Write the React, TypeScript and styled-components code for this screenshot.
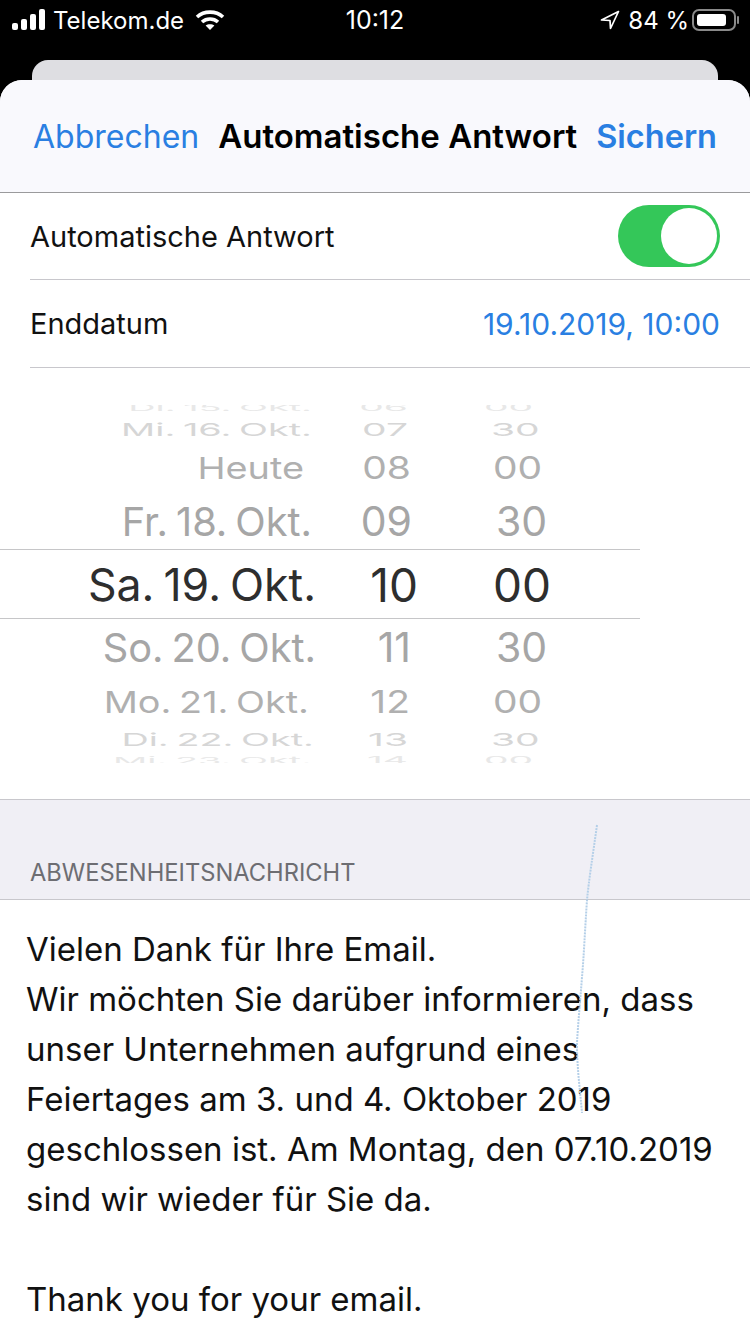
import styled, { createGlobalStyle } from "styled-components";

const FONT = `Inter, "Liberation Sans", sans-serif`;
const BLUE = "#2a7fe2";

interface WheelRow {
  date: string;
  hour: string;
  minute: string;
  height: number;
  size: number;
  squash: number;
  nudge: number;
  color: string;
  dateEnd: number;
  hourEnd: number;
  minuteStart: number;
}

const wheelRows: WheelRow[] = [
  { date: "Di. 15. Okt.", hour: "06", minute: "00", height: 12, size: 39, squash: 0.25, nudge: -4, color: "#e8e8e8", dateEnd: 312, hourEnd: 408, minuteStart: 484 },
  { date: "Mi. 16. Okt.", hour: "07", minute: "30", height: 24, size: 39, squash: 0.46, nudge: 0, color: "#d6d6d6", dateEnd: 312, hourEnd: 408, minuteStart: 491 },
  { date: "Heute", hour: "08", minute: "00", height: 52, size: 39, squash: 0.8, nudge: 1, color: "#b0b0b0", dateEnd: 304, hourEnd: 411, minuteStart: 493 },
  { date: "Fr. 18. Okt.", hour: "09", minute: "30", height: 56, size: 41, squash: 1, nudge: 1, color: "#a6a6a6", dateEnd: 312, hourEnd: 412, minuteStart: 496 },
  { date: "Sa. 19. Okt.", hour: "10", minute: "00", height: 70, size: 46, squash: 1, nudge: 2, color: "#2e2e2e", dateEnd: 316, hourEnd: 418, minuteStart: 493 },
  { date: "So. 20. Okt.", hour: "11", minute: "30", height: 56, size: 41, squash: 1, nudge: 1, color: "#a6a6a6", dateEnd: 316, hourEnd: 411, minuteStart: 496 },
  { date: "Mo. 21. Okt.", hour: "12", minute: "00", height: 52, size: 39, squash: 0.8, nudge: 1, color: "#b0b0b0", dateEnd: 309, hourEnd: 410, minuteStart: 493 },
  { date: "Di. 22. Okt.", hour: "13", minute: "30", height: 24, size: 39, squash: 0.46, nudge: 0, color: "#d6d6d6", dateEnd: 314, hourEnd: 408, minuteStart: 491 },
  { date: "Mi. 23. Okt.", hour: "14", minute: "00", height: 12, size: 39, squash: 0.25, nudge: 3, color: "#e8e8e8", dateEnd: 312, hourEnd: 408, minuteStart: 484 },
];

const messageLines = [
  "Vielen Dank für Ihre Email.",
  "Wir möchten Sie darüber informieren, dass",
  "unser Unternehmen aufgrund eines",
  "Feiertages am 3. und 4. Oktober 2019",
  "geschlossen ist. Am Montag, den 07.10.2019",
  "sind wir wieder für Sie da.",
  "\u00a0",
  "Thank you for your email.",
];

export default function App() {
  return (
    <Screen>
      <GlobalStyle />
      <StatusBar>
        <StatusLeft>
          <svg width="34" height="22" viewBox="0 0 34 22" fill="#fff">
            <rect x="0" y="14" width="6" height="7" rx="2" />
            <rect x="9" y="10" width="6" height="11" rx="2" />
            <rect x="18" y="5" width="6" height="16" rx="2" />
            <rect x="27" y="0" width="6" height="21" rx="2" />
          </svg>
          <StatusText>Telekom.de</StatusText>
          <WifiIcon width="30" height="22" viewBox="0 0 30 22" fill="none" stroke="#fff" strokeWidth="3.6">
            <path d="M2 8 C9 1.5 21 1.5 28 8" />
            <path d="M7 13 C11.5 9 18.5 9 23 13" />
            <path d="M15 21 L10.6 16.6 C13 14.7 17 14.7 19.4 16.6 Z" fill="#fff" stroke="none" />
          </WifiIcon>
        </StatusLeft>
        <StatusTime>10:12</StatusTime>
        <StatusRight>
          <svg width="20" height="20" viewBox="0 0 20 20" fill="none" stroke="#fff" strokeWidth="1.7" strokeLinejoin="round">
            <path d="M18.5 1.5 L1.5 10 L10 10.5 L10.5 18.5 Z" />
          </svg>
          <StatusText>84 %</StatusText>
          <Battery>
            <BatteryFill />
          </Battery>
        </StatusRight>
      </StatusBar>
      <BackCard />
      <Sheet>
        <NavBar>
          <NavCancel>Abbrechen</NavCancel>
          <NavTitle>Automatische Antwort</NavTitle>
          <NavSave>Sichern</NavSave>
        </NavBar>
        <SettingRow $height={87}>
          <RowLabel>Automatische Antwort</RowLabel>
          <Toggle>
            <ToggleKnob />
          </Toggle>
        </SettingRow>
        <SettingRow $height={88}>
          <RowLabel>Enddatum</RowLabel>
          <RowValue>19.10.2019, 10:00</RowValue>
        </SettingRow>
        <Picker>
          {wheelRows.map((row, i) => (
            <PickerRow key={row.date} $height={row.height} $selected={i === 4}>
              <WheelText $size={row.size} $squash={row.squash} $nudge={row.nudge} $color={row.color}>
                <DateCell $end={row.dateEnd}>{row.date}</DateCell>
                <HourCell $end={row.hourEnd}>{row.hour}</HourCell>
                <MinuteCell $start={row.minuteStart}>{row.minute}</MinuteCell>
              </WheelText>
            </PickerRow>
          ))}
        </Picker>
        <SectionHeader>
          <SectionTitle>ABWESENHEITSNACHRICHT</SectionTitle>
        </SectionHeader>
        <Message>
          {messageLines.map((line, i) => (
            <MessageLine key={i}>{line}</MessageLine>
          ))}
        </Message>
        <Scratch width="30" height="295" viewBox="0 0 30 295" fill="none">
          <path d="M24 1 C20 30 16 55 14 76 C12 105 11 130 9 153 C7 180 5 200 4 219 C4 245 7 265 9 289" stroke="#b4cfe8" strokeWidth="2" strokeDasharray="2 1" />
        </Scratch>
      </Sheet>
    </Screen>
  );
}

const GlobalStyle = createGlobalStyle`
  html, body {
    margin: 0;
    background: #000;
  }
  * {
    box-sizing: border-box;
  }
`;

const Screen = styled.div`
  width: 750px;
  height: 1334px;
  overflow: hidden;
  background: #000;
  font-family: ${FONT};
`;

const StatusBar = styled.div`
  height: 60px;
  padding: 0 12px 20px;
  display: grid;
  grid-template-columns: 1fr auto 1fr;
  align-items: center;
  color: #fff;
`;

const StatusLeft = styled.div`
  display: flex;
  align-items: center;
  gap: 7px;
`;

const WifiIcon = styled.svg`
  margin-left: 4px;
`;

const StatusText = styled.span`
  font-size: 24px;
  font-weight: 400;
`;

const StatusTime = styled.span`
  font-size: 25px;
`;

const StatusRight = styled.div`
  display: flex;
  align-items: center;
  justify-content: flex-end;
  gap: 8px;
`;

const Battery = styled.div`
  position: relative;
  width: 44px;
  height: 22px;
  margin-left: -5px;
  margin-right: 2px;
  padding: 3px;
  border: 2px solid #8a8a8a;
  border-radius: 7px;
  &::after {
    content: "";
    position: absolute;
    right: -5px;
    top: 5px;
    width: 2px;
    height: 8px;
    border-radius: 1px;
    background: #8a8a8a;
  }
`;

const BatteryFill = styled.div`
  width: 84%;
  height: 100%;
  border-radius: 3px;
  background: #fff;
`;

const BackCard = styled.div`
  height: 20px;
  margin: 0 32px;
  border-radius: 16px 16px 0 0;
  background: #dedee2;
`;

const Sheet = styled.div`
  position: relative;
  height: 1254px;
  overflow: hidden;
  border-radius: 22px 22px 0 0;
  background: #fff;
`;

const NavBar = styled.div`
  height: 113px;
  padding: 0 33px;
  display: flex;
  align-items: center;
  justify-content: space-between;
  background: #f9f9fd;
  border-bottom: 1px solid #9a9a9c;
  font-size: 32px;
`;

const NavCancel = styled.span`
  color: ${BLUE};
`;

const NavTitle = styled.span`
  color: #000;
  font-weight: 600;
  font-size: 33px;
`;

const NavSave = styled.span`
  color: ${BLUE};
  font-weight: 600;
  font-size: 32.5px;
`;

const SettingRow = styled.div<{ $height: number }>`
  height: ${(p) => p.$height}px;
  margin-left: 30px;
  padding-right: 30px;
  display: flex;
  align-items: center;
  justify-content: space-between;
  border-bottom: 1px solid #c8c7cc;
`;

const RowLabel = styled.span`
  color: #111;
  font-size: 29px;
`;

const RowValue = styled.span`
  color: ${BLUE};
  font-size: 30px;
`;

const Toggle = styled.div`
  width: 102px;
  height: 62px;
  padding: 3px;
  display: flex;
  justify-content: flex-end;
  border-radius: 31px;
  background: #34c759;
`;

const ToggleKnob = styled.div`
  width: 56px;
  height: 56px;
  border-radius: 50%;
  background: #fff;
`;

const Picker = styled.div`
  height: 432px;
  padding-top: 37px;
  background: #fff;
  border-bottom: 1px solid #c8c7cc;
`;

const PickerRow = styled.div<{ $height: number; $selected: boolean }>`
  width: 640px;
  height: ${(p) => p.$height}px;
  display: flex;
  align-items: center;
  overflow: hidden;
  ${(p) => p.$selected && "border-top: 1px solid #c6c6c8; border-bottom: 1px solid #c6c6c8;"}
`;

const WheelText = styled.div<{ $size: number; $squash: number; $nudge: number; $color: string }>`
  width: 100%;
  position: relative;
  height: ${(p) => p.$size * 1.2}px;
  line-height: ${(p) => p.$size * 1.2}px;
  flex-shrink: 0;
  font-size: ${(p) => p.$size}px;
  color: ${(p) => p.$color};
  transform: translateY(${(p) => p.$nudge}px) scaleY(${(p) => p.$squash});
`;

const DateCell = styled.span<{ $end: number }>`
  position: absolute;
  right: ${(p) => 640 - p.$end}px;
  font-size: 0.97em;
  word-spacing: -0.08em;
  white-space: nowrap;
`;

const HourCell = styled.span<{ $end: number }>`
  position: absolute;
  right: ${(p) => 640 - p.$end}px;
`;

const MinuteCell = styled.span<{ $start: number }>`
  position: absolute;
  left: ${(p) => p.$start}px;
`;

const SectionHeader = styled.div`
  height: 100px;
  padding: 0 0 12px 30px;
  display: flex;
  align-items: flex-end;
  background: #f0eff5;
  border-bottom: 1px solid #c8c7cc;
`;

const SectionTitle = styled.span`
  font-size: 23.7px;
  color: #6d6d72;
`;

const Message = styled.div`
  padding: 24px 0 0 26px;
  background: #fff;
`;

const MessageLine = styled.div`
  height: 50px;
  line-height: 50px;
  font-size: 33px;
  color: #111;
  white-space: nowrap;
`;

const Scratch = styled.svg`
  position: absolute;
  left: 573px;
  top: 744px;
`;
